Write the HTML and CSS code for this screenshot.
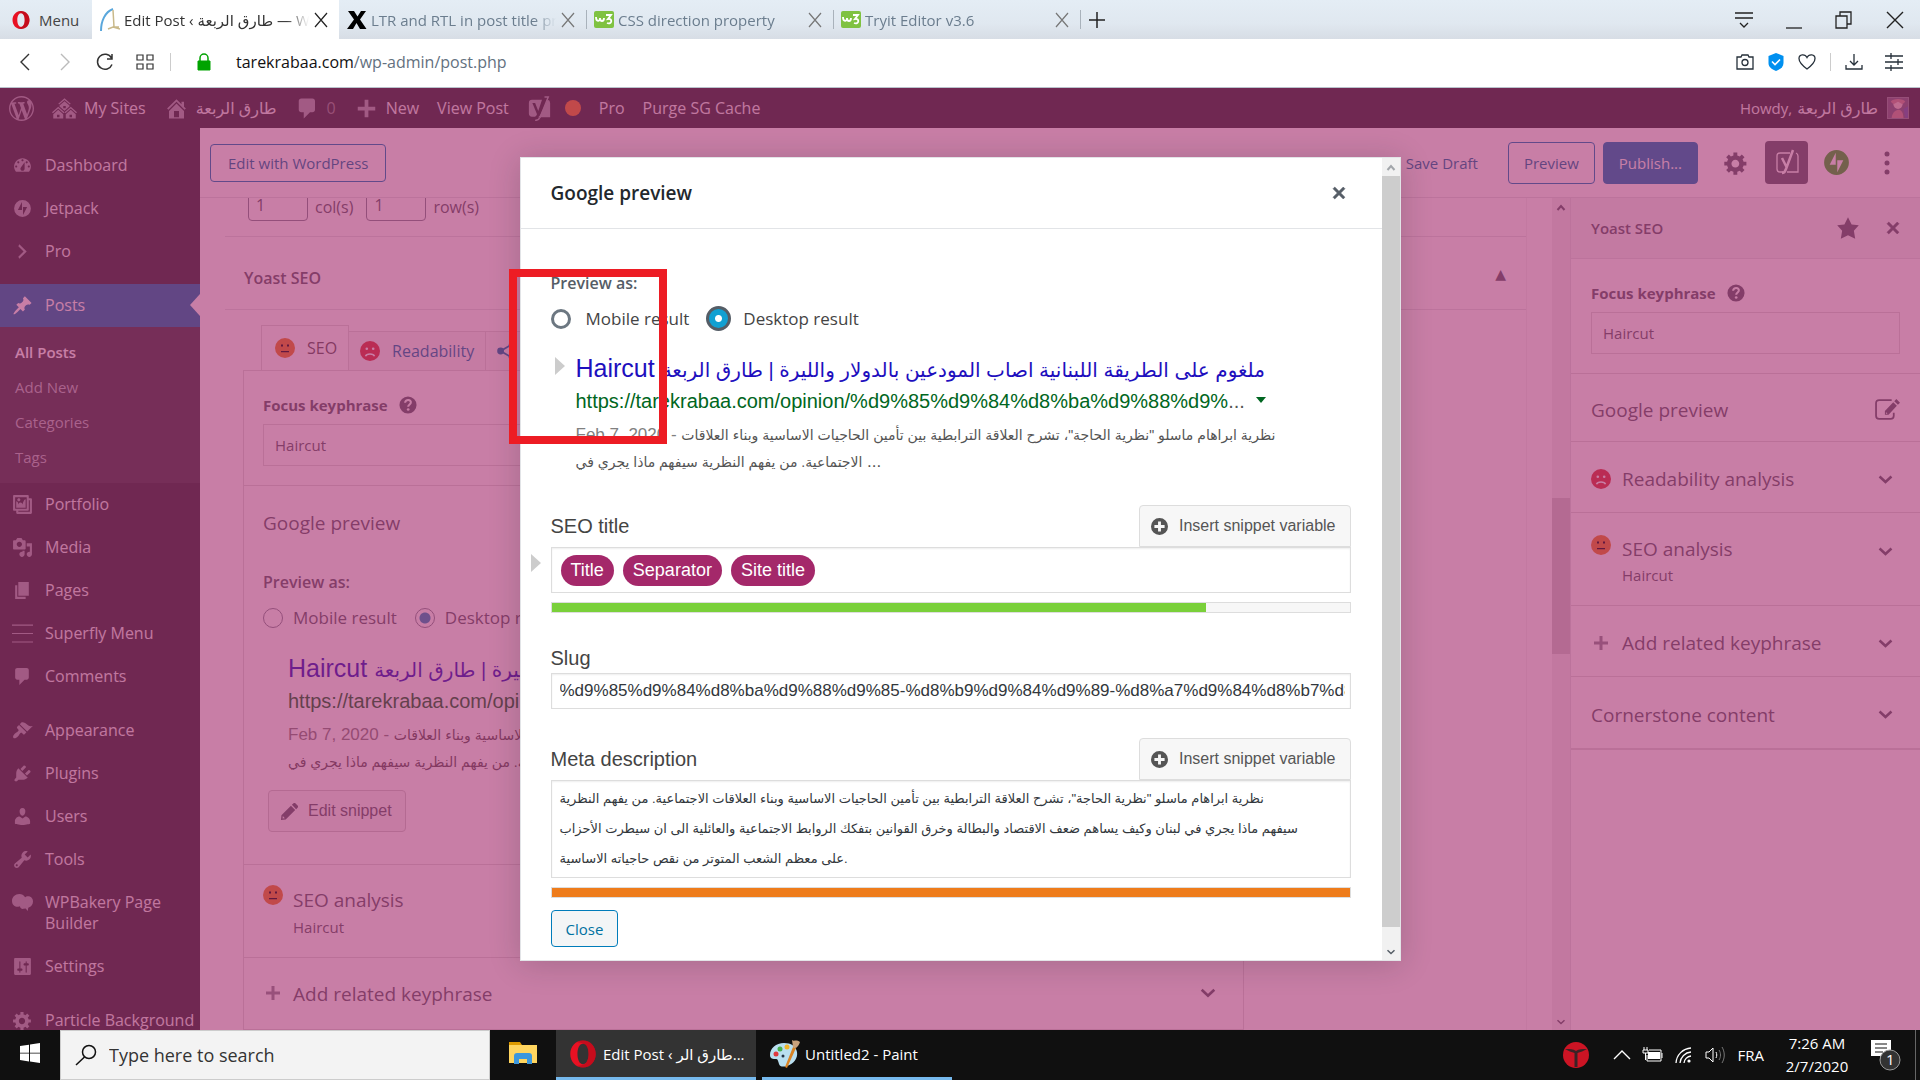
FILE: index.html
```html
<!DOCTYPE html>
<html lang="en">
<head>
  <meta charset="UTF-8">
  <title>Edit Post ‹ طارق الربعة — WordPress</title>
  <meta name="viewport" content="width=device-width, initial-scale=1.0">
  <link rel="stylesheet" href="styles.css">
</head>
<body>

  <!-- icon sprite -->
  <svg class="sprite" aria-hidden="true">
    <symbol id="i-opera" viewBox="0 0 20 20"><path fill="#e81123" d="M10 1C5 1 1.500 5 1.500 10S5 19 10 19c5 0 8.500-4 8.500-9S15 1 10 1zm0 2.200c2.400 0 3.700 3.200 3.700 6.800s-1.300 6.800-3.700 6.800S6.300 13.600 6.300 10 7.600 3.200 10 3.200z"/><path fill="#9b0614" d="M10 1c5 0 8.500 4 8.500 9S15 19 10 19c-1.500 0-2.700-.4-3.800-1.100C12.500 18 13.700 14 13.700 10S12.500 2.500 6.200 2.100C7.300 1.400 8.500 1 10 1z" opacity=".45"/></symbol>
    <symbol id="i-w3" viewBox="0 0 20 17"><rect width="20" height="17" rx="2" fill="#7fc241"/><path d="M2 6c0 5 4 5 4 1 0 4 4 4 4 0M12 4h5l-3 4c5-1 4 6-1 4" fill="none" stroke="#fff" stroke-width="1.800"/></symbol>
    <symbol id="i-close" viewBox="0 0 16 16"><path d="M2 1l12 14M14 1L2 15" fill="none" stroke="currentColor" stroke-width="1.200"/></symbol>
    <symbol id="i-wp" viewBox="0 0 20 20"><path fill-rule="evenodd" d="M20 10c0-5.510-4.490-10-10-10C4.480 0 0 4.490 0 10c0 5.520 4.480 10 10 10 5.510 0 10-4.480 10-10zM7.780 15.370L4.370 6.220c.55-.02 1.170-.08 1.170-.08.5-.06.44-1.130-.06-1.110 0 0-1.450.11-2.370.11-.18 0-.37 0-.58-.01C4.120 2.690 6.870 1.110 10 1.110c2.330 0 4.450.87 6.050 2.340-.68-.11-1.650.39-1.650 1.580 0 .74.45 1.360.9 2.100.35.61.55 1.360.55 2.460 0 1.490-1.400 5-1.400 5l-3.030-8.370c.54-.02.82-.17.82-.17.5-.05.44-1.250-.06-1.220 0 0-1.440.12-2.380.12-.87 0-2.330-.12-2.330-.12-.5-.03-.56 1.200-.06 1.220l.92.08 1.260 3.410zM17.410 10c.24-.64.74-1.870.43-4.250.7 1.290 1.050 2.710 1.050 4.250 0 3.290-1.730 6.240-4.400 7.780.97-2.590 1.940-5.200 2.920-7.780zM6.100 18.090C3.120 16.650 1.110 13.530 1.110 10c0-1.300.23-2.480.72-3.590C3.250 10.300 4.670 14.200 6.100 18.090zm4.030-6.630l2.580 6.980c-.86.29-1.760.45-2.710.45-.79 0-1.570-.11-2.290-.33.81-2.380 1.620-4.740 2.420-7.100z"/></symbol>
    <symbol id="i-sites" viewBox="0 0 20 20"><path fill-rule="evenodd" d="M14.270 6.870L10 3.140 5.730 6.870 5 6.140l5-4.380 5 4.380zM14 8.420l-4.050 3.430L6 8.380v-.74l4-3.500 4 3.500v.78zM11 9.700V8H9v1.700h2zm-1.730 4.030L5 10 .73 13.730 0 13l5-4.380L10 13zm10 0L15 10l-4.270 3.730L10 13l5-4.380L20 13zM5 11l4 3.500V18H1v-3.500zm10 0l4 3.500V18h-8v-3.500zm-9 6v-2H4v2h2zm10 0v-2h-2v2h2z"/></symbol>
    <symbol id="i-home" viewBox="0 0 20 20"><path fill-rule="evenodd" d="M16 8.500l1.530 1.530-1.060 1.060L10 4.600l-6.470 6.470-1.060-1.060L10 2.500l4 4v-2h2v4zm-6-2.460l6 5.990V18H4v-5.970zM12 17v-5H8v5h4z"/></symbol>
    <symbol id="i-comment" viewBox="0 0 20 20"><path d="M5 2h9c1.100 0 2 .9 2 2v7c0 1.100-.9 2-2 2h-2l-5 5v-5H5c-1.100 0-2-.9-2-2V4c0-1.100.9-2 2-2z"/></symbol>
    <symbol id="i-plus" viewBox="0 0 20 20"><path d="M17 8.500v3h-5.500V17h-3v-5.500H3v-3h5.500V3h3v5.500z"/></symbol>
    <symbol id="i-yoast" viewBox="0 0 20 20"><path fill-rule="evenodd" d="M4 3h8l-3 9-2.500-6.500H4.300L8 14.500c-.6 1.600-1.300 2-2.500 2H4A2.500 2.500 0 0 1 1.500 14V5.500A2.500 2.500 0 0 1 4 3zM16.500 3A2.500 2.500 0 0 1 18.500 5.500V17h-10c1.500-.5 2-1.500 2.600-3z"/><path fill="none" stroke="currentColor" stroke-width="1.200" d="M14 .8h3L10.500 17c-.9 2-2 2.500-4 2.500"/></symbol>
    <symbol id="i-dashboard" viewBox="0 0 20 20"><path fill-rule="evenodd" d="M3.760 16h12.480c1.100-1.370 1.760-3.110 1.760-5 0-4.420-3.580-8-8-8s-8 3.580-8 8c0 1.890.66 3.630 1.760 5zM10 4c.55 0 1 .45 1 1s-.45 1-1 1-1-.45-1-1 .45-1 1-1zM6 6c.55 0 1 .45 1 1s-.45 1-1 1-1-.45-1-1 .45-1 1-1zm8 0c.55 0 1 .45 1 1s-.45 1-1 1-1-.45-1-1 .45-1 1-1zm-5.370 5.550L12 7v6c0 1.100-.9 2-2 2s-2-.9-2-2c0-.57.24-1.080.63-1.450zM4 10c.55 0 1 .45 1 1s-.45 1-1 1-1-.45-1-1 .45-1 1-1zm12 0c.55 0 1 .45 1 1s-.45 1-1 1-1-.45-1-1 .45-1 1-1z"/></symbol>
    <symbol id="i-jetpack" viewBox="0 0 20 20"><path fill-rule="evenodd" d="M10 2a8 8 0 1 0 0 16 8 8 0 0 0 0-16zM9.500 3.700v7.700H5.600zM10.500 16.300V8.600h3.900z"/></symbol>
    <symbol id="i-right" viewBox="0 0 20 20"><path d="M6 15l5-5-5-5 1-2 7 7-7 7z"/></symbol>
    <symbol id="i-pin" viewBox="0 0 20 20"><path d="M10.440 3.020l1.820-1.820 6.360 6.350-1.830 1.820c-1.050-.68-2.480-.57-3.410.36l-.75.75c-.92.93-1.040 2.350-.35 3.410l-1.830 1.820-2.410-2.410-2.800 2.790c-.42.42-3.380 2.710-3.800 2.290s1.860-3.390 2.280-3.810l2.790-2.790L4.100 9.360l1.830-1.820c1.050.69 2.480.57 3.400-.36l.75-.75c.93-.92 1.050-2.350.36-3.410z"/></symbol>
    <symbol id="i-gallery" viewBox="0 0 20 20"><path fill-rule="evenodd" d="M16 4h1.960c.57 0 1.040.47 1.040 1.040v12.920c0 .57-.47 1.040-1.040 1.040H5.040C4.470 19 4 18.530 4 17.960V16H2.040C1.470 16 1 15.530 1 14.960V2.040C1 1.470 1.470 1 2.040 1h12.920c.57 0 1.040.47 1.040 1.040V4zM3 14h11V3H3v11zm5-8.500C8 4.670 7.330 4 6.500 4S5 4.670 5 5.500 5.670 7 6.500 7 8 6.330 8 5.500zm2 4.500s1-5 3-5v8H4V7c2 0 2 3 2 3s.33-2 2-2 2 2 2 2zm7 7V6h-1v8.960c0 .57-.47 1.040-1.040 1.040H6v1h11z"/></symbol>
    <symbol id="i-media" viewBox="0 0 20 20"><path fill-rule="evenodd" d="M13 11V4c0-.55-.45-1-1-1h-1.670L9 1H5L3.670 3H2c-.55 0-1 .45-1 1v7c0 .55.45 1 1 1h10c.55 0 1-.45 1-1zM7 4.500c1.380 0 2.500 1.120 2.500 2.500S8.380 9.500 7 9.500 4.500 8.380 4.500 7 5.620 4.500 7 4.500zM14 6h5v10.500c0 1.380-1.120 2.500-2.500 2.500S14 17.880 14 16.500s1.120-2.500 2.500-2.500c.17 0 .34.02.5.05V9h-3V6zm-4 8.050V13h2v3.500c0 1.380-1.120 2.500-2.500 2.500S7 17.880 7 16.500 8.120 14 9.500 14c.17 0 .34.02.5.05z"/></symbol>
    <symbol id="i-pages" viewBox="0 0 20 20"><path d="M6 15V2h10v13H6zm-1 1h8v2H3V5h2v11z"/></symbol>
    <symbol id="i-lines" viewBox="0 0 20 20"><path d="M0 2h20M0 10h20M0 18h20" fill="none" stroke="currentColor"/></symbol>
    <symbol id="i-brush" viewBox="0 0 20 20"><path d="M14.480 11.060L7.410 3.990l1.500-1.500c.5-.56 2.300-.47 3.510.32 1.210.8 1.430 1.280 2.910 2.100 1.180.64 2.450 1.260 4.450.85zm-.71.71L6.700 4.700 4.930 6.470c-.39.39-.39 1.020 0 1.410l1.060 1.060c.39.39.39 1.030 0 1.420-.6.6-1.430 1.110-2.210 1.690-.35.26-.7.53-1.010.84C1.430 14.230.4 16.080 1.400 17.070c.99 1 2.840-.03 4.180-1.360.31-.31.58-.66.85-1.020.57-.78 1.080-1.610 1.690-2.210.39-.39 1.020-.39 1.410 0l1.060 1.060c.39.39 1.020.39 1.410 0z"/></symbol>
    <symbol id="i-plug" viewBox="0 0 20 20"><path d="M13.110 4.360L9.870 7.600 8 5.730l3.240-3.240c.35-.34 1.050-.2 1.560.32.52.51.66 1.210.31 1.550zm-8 1.770l.91-1.120 9.010 9.010-1.190.84c-.71.71-2.630 1.160-3.820 1.160H6.140L4.900 17.260c-.59.59-1.540.59-2.120 0-.59-.58-.59-1.530 0-2.120l1.240-1.240v-3.880c0-1.130.4-3.190 1.090-3.890zm7.260 3.970l3.240-3.240c.34-.35 1.040-.21 1.550.31.52.51.66 1.210.31 1.550l-3.240 3.250z"/></symbol>
    <symbol id="i-user" viewBox="0 0 20 20"><path d="M10 9.250c-2.270 0-2.730-3.440-2.730-3.440C7 4.020 7.820 2 9.970 2c2.160 0 2.980 2.020 2.710 3.810 0 0-.41 3.440-2.680 3.440zm0 2.570L12.720 10c2.390 0 4.520 2.330 4.520 4.530v2.490s-3.650 1.130-7.240 1.130c-3.650 0-7.240-1.130-7.240-1.130v-2.490c0-2.250 1.940-4.480 4.470-4.480z"/></symbol>
    <symbol id="i-wrench" viewBox="0 0 20 20"><path fill-rule="evenodd" d="M16.680 9.770c-1.340 1.340-3.300 1.670-4.950.99l-5.410 6.520c-.99.99-2.590.99-3.580 0s-.99-2.590 0-3.570l6.520-5.420c-.68-1.650-.35-3.610.99-4.950 1.280-1.280 3.120-1.620 4.720-1.060l-2.890 2.890 2.820 2.820 2.860-2.870c.53 1.580.18 3.390-1.080 4.650zM3.810 16.210c.4.39 1.040.39 1.430 0 .4-.4.4-1.040 0-1.430-.39-.4-1.030-.4-1.430 0-.39.39-.39 1.030 0 1.430z"/></symbol>
    <symbol id="i-bakery" viewBox="0 0 20 20"><path d="M7 2C3 2 0 5 0 8.500 0 12 2.500 14 5.500 14c1 0 1.500-.3 2-.5.500 2 2 3 3.500 2.500l2-.3 2 2.300.5-3C18.500 14 20 11.500 20 9c0-3-2-5-4.500-5-1.500 0-2.500.6-3 1C11 3 9.500 2 7 2z"/></symbol>
    <symbol id="i-sliders" viewBox="0 0 20 20"><path fill-rule="evenodd" d="M18 17V3c0-.55-.45-1-1-1H3c-.55 0-1 .45-1 1v14c0 .55.45 1 1 1h14c.55 0 1-.45 1-1zM8 12h1c.55 0 1 .45 1 1s-.45 1-1 1H8v1.500c0 .28-.22.5-.5.5s-.5-.22-.5-.5V14H6c-.55 0-1-.45-1-1s.45-1 1-1h1V5.500c0-.28.22-.5.5-.5s.5.22.5.5V12zm5-3h-1c-.55 0-1-.45-1-1s.45-1 1-1h1V5.500c0-.28.22-.5.5-.5s.5.22.5.5V7h1c.55 0 1 .45 1 1s-.45 1-1 1h-1v6.500c0 .28-.22.5-.5.5s-.5-.22-.5-.5V9z"/></symbol>
    <symbol id="i-gear" viewBox="0 0 20 20"><path fill-rule="evenodd" d="M18 12h-2.180c-.17.7-.44 1.350-.81 1.930l1.540 1.540-2.100 2.100-1.540-1.540c-.58.36-1.230.63-1.910.79V19H8v-2.180c-.68-.16-1.330-.43-1.910-.79l-1.540 1.540-2.120-2.120 1.540-1.540c-.36-.58-.63-1.230-.79-1.910H1V9.030h2.170c.16-.7.44-1.350.8-1.940L2.430 5.550l2.100-2.100 1.540 1.540c.58-.37 1.240-.64 1.930-.81V2h3v2.180c.68.16 1.330.43 1.910.79l1.540-1.540 2.120 2.120-1.540 1.540c.36.59.64 1.240.8 1.940H18V12zm-8.500 1.500c1.660 0 3-1.340 3-3s-1.340-3-3-3-3 1.340-3 3 1.340 3 3 3z"/></symbol>
    <symbol id="i-star" viewBox="0 0 20 20"><path d="M10 1l3 6 6 .75-4.120 4.620L16 19l-6-3-6 3 1.130-6.630L1 7.750 7 7z"/></symbol>
    <symbol id="i-x" viewBox="0 0 20 20"><path stroke="currentColor" stroke-width=".5" d="M14.950 6.460L11.410 10l3.540 3.540-1.410 1.410L10 11.420l-3.530 3.530-1.420-1.420L8.580 10 5.050 6.470l1.420-1.420L10 8.580l3.540-3.530z"/></symbol>
    <symbol id="i-help" viewBox="0 0 20 20"><circle cx="10" cy="10" r="9.500"/><path d="M6.800 7.500c.3-4.500 7-3.800 6.300.2-.3 1.700-2.900 1.900-2.900 4.300" fill="none" stroke="#fff" stroke-width="2.300"/><circle cx="10.200" cy="15" r="1.500" fill="#fff"/></symbol>
    <symbol id="i-ok" viewBox="0 0 20 20"><circle cx="10" cy="10" r="10" fill="#ee7c1b"/><path fill="#000" d="M6 6.500h2v2H6zM12 6.500h2v2h-2zM6 13h8v1.200H6z"/></symbol>
    <symbol id="i-bad" viewBox="0 0 20 20"><circle cx="10" cy="10" r="10" fill="#dc3232"/><circle cx="6.800" cy="7.800" r="1.300" fill="#fff"/><circle cx="13.200" cy="7.800" r="1.300" fill="#fff"/><path d="M5.500 15.200c1-3 8-3 9 0" fill="none" stroke="#fff" stroke-width="1.500"/></symbol>
    <symbol id="i-down" viewBox="0 0 20 20"><path d="M3 6.500l7 6.500 7-6.500" fill="none" stroke="currentColor" stroke-width="3"/></symbol>
    <symbol id="i-circleplus" viewBox="0 0 20 20"><path fill-rule="evenodd" d="M10 0a10 10 0 1 0 0 20 10 10 0 0 0 0-20zM8.300 4h3.400v4.300H16v3.400h-4.300V16H8.300v-4.300H4V8.300h4.300z"/></symbol>
    <symbol id="i-pencil" viewBox="0 0 20 20"><path fill-rule="evenodd" d="M14 1.500c.7-.7 1.700-.7 2.400 0l2.100 2.100c.7.7.7 1.700 0 2.400L17 7.500 12.500 3zM11.500 4L16 8.500 6 18.500l-5 .5.500-5zM3 14.800l-.3 2.500 2.400-.3z"/></symbol>
    <symbol id="i-edit" viewBox="0 0 24 20"><path d="M16 1H4C2 1 1 2 1 4v12c0 2 1 3 3 3h11c2 0 3-1 3-3v-3" fill="none" stroke="currentColor" stroke-width="1.700"/><path fill-rule="evenodd" d="M20.500 0L24 3.500l-2 2L18.500 2zM17.500 3L21 6.500 13 15H9.500v-3.500zm-7 9.500v1.500H12z"/></symbol>
    <symbol id="i-share" viewBox="0 0 20 20"><circle cx="4" cy="10" r="3.800"/><circle cx="16" cy="3" r="3"/><circle cx="16" cy="17" r="3"/><path d="M16 3L4 10l12 7" fill="none" stroke="currentColor" stroke-width="2"/></symbol>
  </svg>

  <header class="browser">
    <div class="tabs">
      <button class="opera-menu"><svg width="20" height="20"><use href="#i-opera"/></svg>Menu</button>
      <div class="tab active">
        <svg width="20" height="24" viewBox="0 0 20 24"><path d="M13 1C5 4 1 13 1 23" fill="none" stroke="#5aa7dc" stroke-width="2"/><path d="M13 2l1 17M8 21l5-2 7 2M14 19l5 0" fill="none" stroke="#c9b98a" stroke-width="1.500"/></svg>
        <span class="tab-title">Edit Post ‹ طارق الربعة — WordPress</span>
        <button class="tab-close" aria-label="Close tab"><svg width="16" height="16"><use href="#i-close"/></svg></button>
      </div>
      <div class="tab">
        <svg width="20" height="20" viewBox="0 0 20 20"><path d="M1 1h6l3.500 5.500L14 1h5l-6 8.500L19.500 19H13l-3.500-6L6 19H0l7-9.500z" fill="#000"/></svg>
        <span class="tab-title">LTR and RTL in post title preview</span>
        <button class="tab-close" aria-label="Close tab"><svg width="16" height="16"><use href="#i-close"/></svg></button>
      </div>
      <div class="tab">
        <svg width="20" height="17"><use href="#i-w3"/></svg>
        <span class="tab-title">CSS direction property</span>
        <button class="tab-close" aria-label="Close tab"><svg width="16" height="16"><use href="#i-close"/></svg></button>
      </div>
      <div class="tab">
        <svg width="20" height="17"><use href="#i-w3"/></svg>
        <span class="tab-title">Tryit Editor v3.6</span>
        <button class="tab-close" aria-label="Close tab"><svg width="16" height="16"><use href="#i-close"/></svg></button>
      </div>
      <button class="new-tab" aria-label="New tab"><svg width="16" height="16" viewBox="0 0 16 16"><path d="M8 0v16M0 8h16" stroke="#222" stroke-width="1.500"/></svg></button>
      <div class="window-buttons">
        <button aria-label="Tab menu"><svg width="18" height="18" viewBox="0 0 18 18"><path d="M0 2h18M0 7h18M5 12l4 4 4-4" fill="none" stroke="#222" stroke-width="1.300"/></svg></button>
        <button aria-label="Minimize"><svg width="16" height="18" viewBox="0 0 16 18"><path d="M0 17h16" stroke="#222" stroke-width="1.300"/></svg></button>
        <button aria-label="Restore"><svg width="18" height="18" viewBox="0 0 18 18"><path d="M1 5h11v12H1zM5 5V1h11v12h-4" fill="none" stroke="#222" stroke-width="1.300"/></svg></button>
        <button aria-label="Close"><svg width="18" height="18" viewBox="0 0 18 18"><path d="M1 1l16 16M17 1L1 17" stroke="#222" stroke-width="1.400"/></svg></button>
      </div>
    </div>
    <div class="address-bar">
      <div class="nav-buttons">
        <button aria-label="Back"><svg width="18" height="18" viewBox="0 0 18 18"><path d="M13 1L5 9l8 8" fill="none" stroke="#333" stroke-width="1.400"/></svg></button>
        <button aria-label="Forward"><svg width="18" height="18" viewBox="0 0 18 18"><path d="M5 1l8 8-8 8" fill="none" stroke="#bbb" stroke-width="1.400"/></svg></button>
        <button aria-label="Reload"><svg width="18" height="18" viewBox="0 0 18 18"><path d="M16 11.500A7.500 7.500 0 1 1 15.500 5M16 1v5h-5" fill="none" stroke="#333" stroke-width="1.500"/></svg></button>
        <button aria-label="Speed dial"><svg width="18" height="18" viewBox="0 0 18 18"><path d="M1 2h6v5H1zM11 2h6v5h-6zM1 11h6v5H1zM11 11h6v5h-6z" fill="none" stroke="#333" stroke-width="1.200"/></svg></button>
      </div>
      <span class="divider"></span>
      <svg class="lock" width="14" height="18" viewBox="0 0 14 18"><path d="M1 8h12v9H1z" fill="#00a300" stroke="#00a300"/><path d="M3 8V5a4 4 0 0 1 8 0v3" fill="none" stroke="#00a300" stroke-width="1.500"/></svg>
      <span class="url">tarekrabaa.com<span>/wp-admin/post.php</span></span>
      <div class="address-tools">
        <button aria-label="Snapshot"><svg width="18" height="18" viewBox="0 0 18 18"><path d="M1 4h4l1-2h6l1 2h4v12H1z" fill="none" stroke="#26303a" stroke-width="1.300"/><circle cx="9" cy="9.500" r="3" fill="none" stroke="#26303a" stroke-width="1.300"/></svg></button>
        <button aria-label="Protection"><svg width="16" height="18" viewBox="0 0 16 18"><path d="M8 0l7.500 3v7c0 4-3 6-7.500 8-4.500-2-7.500-4-7.500-8V3z" fill="#0090f0"/><path d="M4 8.500l3 3 5-5" fill="none" stroke="#fff" stroke-width="1.600"/></svg></button>
        <button aria-label="Bookmark"><svg width="18" height="18" viewBox="0 0 18 18"><path d="M9 16C5 13 1 9.500 1 5.500 1 1 7 .5 9 4.500 11 .5 17 1 17 5.500 17 9.500 13 13 9 16z" fill="none" stroke="#26303a" stroke-width="1.300"/></svg></button>
        <span class="divider"></span>
        <button aria-label="Downloads"><svg width="18" height="18" viewBox="0 0 18 18"><path d="M9 1v11M5 8l4 4 4-4M1 12v4h16v-4" fill="none" stroke="#26303a" stroke-width="1.300"/></svg></button>
        <button aria-label="Easy setup"><svg width="18" height="18" viewBox="0 0 18 18"><path d="M0 3h18M0 9h18M0 15h18M6 0v6M13 6v6M6 12v6" stroke="#26303a" stroke-width="1.300"/></svg></button>
      </div>
    </div>
  </header>

  <div class="page">
    <nav class="adminbar">
      <a href="#" class="muted"><svg width="25" height="25"><use href="#i-wp"/></svg></a>
      <a href="#"><svg width="25" height="25"><use href="#i-sites"/></svg>My Sites</a>
      <a href="#" class="ar"><svg width="25" height="25"><use href="#i-home"/></svg>طارق الربعة</a>
      <a href="#" class="count"><svg width="25" height="25"><use href="#i-comment"/></svg>0</a>
      <a href="#"><svg width="25" height="25"><use href="#i-plus"/></svg>New</a>
      <a href="#">View Post</a>
      <a href="#" class="yoast"><svg width="25" height="25"><use href="#i-yoast"/></svg><span class="dot"></span></a>
      <a href="#">Pro</a>
      <a href="#">Purge SG Cache</a>
      <a href="#" class="howdy">Howdy, <span class="ar">طارق الربعة</span>
        <svg class="avatar" width="22" height="22" viewBox="0 0 22 22"><rect width="22" height="22" fill="#6d6475"/><circle cx="11" cy="7" r="5" fill="#e8cfc6"/><path d="M3 4c2-4 14-4 16 0l-3 3-5-3-5 3zM4 22c1-7 5-9 8-9s5 4 5 9z" fill="#c58f8a"/><path d="M17 12l5-3v13h-3z" fill="#5a63a0"/></svg>
      </a>
    </nav>

    <div class="wp">
      <nav class="adminmenu">
        <ul>
          <li><a href="#"><svg width="25" height="25"><use href="#i-dashboard"/></svg>Dashboard</a></li>
          <li><a href="#"><svg width="25" height="25"><use href="#i-jetpack"/></svg>Jetpack</a></li>
          <li><a href="#"><svg width="25" height="25"><use href="#i-right"/></svg>Pro</a></li>
        </ul>
        <ul>
          <li class="current"><a href="#"><svg width="25" height="25"><use href="#i-pin"/></svg>Posts</a>
            <ul class="submenu">
              <li><a href="#" class="selected">All Posts</a></li>
              <li><a href="#">Add New</a></li>
              <li><a href="#">Categories</a></li>
              <li><a href="#">Tags</a></li>
            </ul>
          </li>
          <li><a href="#"><svg width="25" height="25"><use href="#i-gallery"/></svg>Portfolio</a></li>
          <li><a href="#"><svg width="25" height="25"><use href="#i-media"/></svg>Media</a></li>
          <li><a href="#"><svg width="25" height="25"><use href="#i-pages"/></svg>Pages</a></li>
          <li><a href="#"><svg width="25" height="25"><use href="#i-lines"/></svg>Superfly Menu</a></li>
          <li><a href="#"><svg width="25" height="25"><use href="#i-comment"/></svg>Comments</a></li>
        </ul>
        <ul>
          <li><a href="#"><svg width="25" height="25"><use href="#i-brush"/></svg>Appearance</a></li>
          <li><a href="#"><svg width="25" height="25"><use href="#i-plug"/></svg>Plugins</a></li>
          <li><a href="#"><svg width="25" height="25"><use href="#i-user"/></svg>Users</a></li>
          <li><a href="#"><svg width="25" height="25"><use href="#i-wrench"/></svg>Tools</a></li>
          <li><a href="#"><svg width="25" height="25"><use href="#i-bakery"/></svg>WPBakery Page<br>Builder</a></li>
          <li><a href="#"><svg width="25" height="25"><use href="#i-sliders"/></svg>Settings</a></li>
        </ul>
        <ul>
          <li><a href="#"><svg width="25" height="25"><use href="#i-gear"/></svg>Particle Background</a></li>
        </ul>
      </nav>

      <main class="editor">
        <div class="editor-header">
          <button class="btn outline">Edit with WordPress</button>
          <div class="editor-actions">
            <button class="link-btn">Save Draft</button>
            <button class="btn outline tall">Preview</button>
            <button class="btn primary tall">Publish...</button>
            <button class="icon-btn" aria-label="Settings"><svg width="26" height="26"><use href="#i-gear"/></svg></button>
            <button class="icon-btn pressed" aria-label="Yoast SEO"><svg width="28" height="28" viewBox="0 0 28 28"><path d="M17 4H7C5 4 4 5 4 7v13c0 2 1 3 3 3h3M14 23h11V7c0-1.500-.8-2.500-2-3" fill="none" stroke="#fff" stroke-width="1.300"/><path d="M9 9l5 10M20 1l-7 19c-1 3-2 4-4 4" fill="none" stroke="#fff" stroke-width="2.500"/></svg></button>
            <button class="icon-btn jetpack" aria-label="Jetpack"><svg width="31" height="31"><use href="#i-jetpack"/></svg></button>
            <button class="icon-btn" aria-label="More"><svg width="6" height="24" viewBox="0 0 6 24"><circle cx="3" cy="3" r="2.500"/><circle cx="3" cy="12" r="2.500"/><circle cx="3" cy="21" r="2.500"/></svg></button>
          </div>
        </div>

        <div class="editor-body">
          <div class="metaboxes">
            <div class="grid-fields">
              <input type="text" id="cols" value="1"><label for="cols">col(s)</label>
              <input type="text" id="rows" value="1"><label for="rows">row(s)</label>
            </div>
            <div class="metabox-title"><h2>Yoast SEO</h2><span>▲</span></div>

            <div class="yoast-box">
              <div class="yoast-tabs">
                <button class="active"><svg width="20" height="20"><use href="#i-ok"/></svg>SEO</button>
                <button><svg width="20" height="20"><use href="#i-bad"/></svg>Readability</button>
                <button aria-label="Social"><svg width="18" height="20"><use href="#i-share"/></svg></button>
              </div>
              <div class="yoast-panel">
                <section class="keyphrase">
                  <label for="kw1">Focus keyphrase <svg width="18" height="18"><use href="#i-help"/></svg></label>
                  <input type="text" id="kw1" value="Haircut">
                </section>
                <section class="preview-section">
                  <h3>Google preview</h3>
                  <div class="preview-as">Preview as:</div>
                  <div class="radios">
                    <label><input type="radio" name="view1">Mobile result</label>
                    <label><input type="radio" name="view1" checked>Desktop result</label>
                  </div>
                  <div class="snippet">
                    <div class="snippet-title">Haircut <span class="ar">ملغوم على الطريقة اللبنانية اصاب المودعين بالدولار والليرة | طارق الربعة</span></div>
                    <div class="snippet-url">https://tarekrabaa.com/opinion/%d9%85%d9%84%d8%ba%d9%88%d9%...</div>
                    <div class="snippet-desc"><span class="date">Feb 7, 2020 - </span><span class="ar">نظرية ابراهام ماسلو "نظرية الحاجة"، تشرح العلاقة الترابطية بين تأمين الحاجيات الاساسية وبناء العلاقات<br>الاجتماعية. من يفهم النظرية سيفهم ماذا يجري في</span> ...</div>
                  </div>
                  <button class="edit-snippet"><svg width="19" height="19"><use href="#i-pencil"/></svg>Edit snippet</button>
                </section>
                <section class="collapse">
                  <svg width="20" height="20"><use href="#i-ok"/></svg>
                  <div><h3>SEO analysis</h3><p>Haircut</p></div>
                </section>
                <section class="collapse related">
                  <svg width="20" height="20" class="soft"><use href="#i-plus"/></svg>
                  <div><h3>Add related keyphrase</h3></div>
                  <svg width="18" height="18" class="chevron"><use href="#i-down"/></svg>
                </section>
              </div>
            </div>
          </div>

          <div class="scrollbar page-scroll">
            <svg width="10" height="10" viewBox="0 0 20 20"><path d="M3 14l7-8 7 8" fill="none" stroke="currentColor" stroke-width="4"/></svg>
            <span class="thumb"></span>
            <svg width="10" height="10"><use href="#i-down"/></svg>
          </div>

          <aside class="yoast-sidebar">
            <div class="sidebar-header">
              <strong>Yoast SEO</strong>
              <button aria-label="Unpin"><svg width="24" height="24"><use href="#i-star"/></svg></button>
              <button aria-label="Close settings"><svg width="24" height="24"><use href="#i-x"/></svg></button>
            </div>
            <section class="keyphrase">
              <label for="kw2">Focus keyphrase <svg width="18" height="18"><use href="#i-help"/></svg></label>
              <input type="text" id="kw2" value="Haircut">
            </section>
            <button class="side-row preview-row"><span>Google preview</span><svg width="25" height="21" class="end"><use href="#i-edit"/></svg></button>
            <button class="side-row"><svg width="20" height="20"><use href="#i-bad"/></svg><span>Readability analysis</span><svg width="17" height="17" class="end"><use href="#i-down"/></svg></button>
            <button class="side-row two-line"><svg width="20" height="20"><use href="#i-ok"/></svg><span>SEO analysis<small>Haircut</small></span><svg width="17" height="17" class="end"><use href="#i-down"/></svg></button>
            <button class="side-row"><svg width="20" height="20" class="soft"><use href="#i-plus"/></svg><span>Add related keyphrase</span><svg width="17" height="17" class="end"><use href="#i-down"/></svg></button>
            <button class="side-row last"><span>Cornerstone content</span><svg width="17" height="17" class="end"><use href="#i-down"/></svg></button>
          </aside>
        </div>
      </main>
    </div>

    <div class="overlay">
      <div class="modal" role="dialog" aria-labelledby="modal-title">
        <div class="modal-main">
          <div class="modal-header">
            <h1 id="modal-title">Google preview</h1>
            <button aria-label="Close dialog"><svg width="24" height="24"><use href="#i-x"/></svg></button>
          </div>
          <div class="modal-body">
            <div class="preview-as">Preview as:</div>
            <div class="radios big">
              <label><input type="radio" name="view2">Mobile result</label>
              <label><input type="radio" name="view2" checked>Desktop result</label>
            </div>
            <div class="snippet with-caret">
              <div class="snippet-title">Haircut <span class="ar">ملغوم على الطريقة اللبنانية اصاب المودعين بالدولار والليرة | طارق الربعة</span></div>
              <div class="snippet-url">https://tarekrabaa.com/opinion/%d9%85%d9%84%d8%ba%d9%88%d9%<span class="dots">...</span></div>
              <div class="snippet-desc"><span class="date">Feb 7, 2020 - </span><span class="ar">نظرية ابراهام ماسلو "نظرية الحاجة"، تشرح العلاقة الترابطية بين تأمين الحاجيات الاساسية وبناء العلاقات<br>الاجتماعية. من يفهم النظرية سيفهم ماذا يجري في</span> ...</div>
            </div>

            <div class="field-head">
              <span>SEO title</span>
              <button class="insert"><svg width="17" height="17"><use href="#i-circleplus"/></svg>Insert snippet variable</button>
            </div>
            <div class="title-field">
              <span class="pill">Title</span>
              <span class="pill">Separator</span>
              <span class="pill">Site title</span>
            </div>
            <div class="bar"><span class="good"></span></div>

            <label class="slug-label" for="slug">Slug</label>
            <input class="slug" type="text" id="slug" value="%d9%85%d9%84%d8%ba%d9%88%d9%85-%d8%b9%d9%84%d9%89-%d8%a7%d9%84%d8%b7%d8%b1%d9%8a%d9%82%d8%a9">

            <div class="field-head meta-head">
              <label for="meta">Meta description</label>
              <button class="insert"><svg width="17" height="17"><use href="#i-circleplus"/></svg>Insert snippet variable</button>
            </div>
            <textarea id="meta" rows="3">نظرية ابراهام ماسلو "نظرية الحاجة"، تشرح العلاقة الترابطية بين تأمين الحاجيات الاساسية وبناء العلاقات الاجتماعية. من يفهم النظرية
سيفهم ماذا يجري في لبنان وكيف يساهم ضعف الاقتصاد والبطالة وخرق القوانين بتفكك الروابط الاجتماعية والعائلية الى ان سيطرت الأحزاب
على معظم الشعب المتوتر من نقص حاجياته الاساسية.</textarea>
            <div class="bar"><span class="ok"></span></div>
            <button class="close-btn">Close</button>
          </div>
        </div>
        <div class="scrollbar modal-scroll">
          <svg width="10" height="10" viewBox="0 0 20 20" class="faint"><path d="M3 14l7-8 7 8" fill="none" stroke="currentColor" stroke-width="4"/></svg>
          <span class="thumb"></span>
          <svg width="10" height="10"><use href="#i-down"/></svg>
        </div>
        <div class="red-box"></div>
      </div>
    </div>
  </div>

  <footer class="taskbar">
    <button class="start" aria-label="Start"><svg width="20" height="20" viewBox="0 0 20 20"><path d="M0 3l9-1.300v8H0zM10 1.500L20 0v9.700H10zM0 10.500h9v8L0 17zM10 10.500h10V20l-10-1.500z" fill="#fff"/></svg></button>
    <label class="search">
      <svg width="22" height="22" viewBox="0 0 22 22"><circle cx="14" cy="8" r="6.500" fill="none" stroke="#111" stroke-width="1.500"/><path d="M9.500 13L1 21" stroke="#111" stroke-width="1.500"/></svg>
      <input type="text" placeholder="Type here to search">
    </label>
    <button class="explorer" aria-label="File Explorer"><svg width="28" height="24" viewBox="0 0 28 24"><path d="M0 1h11l2 3h13v4H0z" fill="#dd9a00"/><path d="M0 4h28v18H0z" fill="#ffd55f"/><path d="M5 23v-8c0-2 1-3 3-3h12c2 0 3 1 3 3v8h-5v-5h-8v5z" fill="#3c97dd"/></svg></button>
    <button class="task active"><svg width="30" height="30"><use href="#i-opera"/></svg><span>Edit Post ‹ طارق الر...</span></button>
    <button class="task paint"><svg width="30" height="30" viewBox="0 0 30 30"><path d="M14 4C6 4 0 9 0 16c0 4 3 4 6 4 2 0 2 2 3 5 1 3 4 3 8 2 7-2 11-8 10-14-1-6-6-9-13-9z" fill="#b9dff0"/><circle cx="6" cy="15" r="2.500" fill="#e0393e"/><circle cx="10" cy="10" r="2.500" fill="#47ae4b"/><circle cx="17" cy="8" r="2.500" fill="#f0b429"/><circle cx="13" cy="17" r="1.500" fill="#234"/><path d="M23 8l3 1-9 20-2-1z" fill="#d98324"/><path d="M22 1c2 2 4-1 8 2-1 3-2 4-4 6l-3-1z" fill="#c9a27c"/></svg><span>Untitled2 - Paint</span></button>
    <div class="tray">
      <svg width="26" height="26" viewBox="0 0 26 26"><circle cx="13" cy="13" r="13" fill="#cc1424"/><path d="M2 7c5 0 8 0 11 2 3-2 6-2 11-2-3 2-7 3-9.500 4v14h-3V11C9 10 5 9 2 7z" fill="#3a2326"/></svg>
      <svg width="16" height="16" viewBox="0 0 16 16"><path d="M0 12l8-8 8 8" fill="none" stroke="#fff" stroke-width="1.400"/></svg>
      <svg width="20" height="16" viewBox="0 0 20 16"><path d="M5 5h12v7H5z" fill="#fff"/><path d="M4 8v6h14V3H6M19 6v5M0 3h5v3H0zM1 0v3M4 0v3M2.500 6v7" fill="none" stroke="#fff"/></svg>
      <svg width="16" height="16" viewBox="0 0 16 16"><path d="M0 16A16 16 0 0 1 15 1M4 16A12 12 0 0 1 15 5M8 16a8 8 0 0 1 7-7" fill="none" stroke="#fff" stroke-width="1.300"/><circle cx="13" cy="14" r="1.600" fill="#fff"/></svg>
      <svg width="20" height="18" viewBox="0 0 20 18"><path d="M1 6h3l4-4v14l-4-4H1z" fill="none" stroke="#fff"/><path d="M11 6c1 2 1 4 0 6" fill="none" stroke="#fff"/><path d="M14 4c2 3 2 7 0 10M17 1c3 5 3 11 0 16" fill="none" stroke="#777"/></svg>
      <span class="lang">FRA</span>
      <div class="clock">7:26 AM<br>2/7/2020</div>
      <button class="notes" aria-label="Notifications"><svg width="32" height="32" viewBox="0 0 32 32"><path d="M1 1h20v16h-6l-5 5v-5H1z" fill="#fff"/><path d="M5 5h12M5 9h12M5 13h8" stroke="#101010"/><circle cx="20" cy="21" r="10" fill="#333" stroke="#999"/></svg><b>1</b></button>
      <span class="show-desktop"></span>
    </div>
  </footer>

</body>
</html>
```
FILE: styles.css
```css
* {
  box-sizing: border-box;
}

body {
  display: flex;
  flex-direction: column;
  height: 100vh;
  margin: 0;
  overflow: hidden;
  font-family: "Open Sans", "DejaVu Sans", sans-serif;
  font-size: 16px;
  color: #555d66;
}

button {
  padding: 0;
  border: 0;
  background: none;
  font: inherit;
  color: inherit;
}

input,
textarea {
  font: inherit;
  color: inherit;
}

a {
  color: inherit;
  text-decoration: none;
}

h1, h2, h3, p, ul {
  margin: 0;
  padding: 0;
}

ul {
  list-style: none;
}

svg {
  flex: none;
  fill: currentColor;
}

.sprite {
  position: absolute;
  width: 0;
  height: 0;
}

/* browser */
.tabs {
  display: flex;
  height: 39px;
  background: linear-gradient(#e4edf5, #e0e8f0 60%, #d7dde5);
  font-size: 15px;
}

.opera-menu {
  display: flex;
  align-items: center;
  gap: 8px;
  width: 92px;
  padding-left: 11px;
  color: #444;
}

.tab {
  display: flex;
  align-items: center;
  gap: 4px;
  width: 247px;
  padding: 0 10px 0 8px;
  color: #6b7d8e;
}

.tab + .tab + .tab {
  background: linear-gradient(#a9b2bb, #a9b2bb) left center / 1px 19px no-repeat;
}

.tab.active {
  background: #fff;
  color: #333;
}

.tab-title {
  flex: 1;
  overflow: hidden;
  white-space: nowrap;
  mask-image: linear-gradient(to right, #000 88%, transparent);
}

.tab-close {
  display: flex;
  color: #777;
}

.active .tab-close {
  color: #222;
}

.new-tab {
  display: flex;
  align-items: center;
  padding: 0 9px;
  background: linear-gradient(#a9b2bb, #a9b2bb) left center / 1px 19px no-repeat;
}

.window-buttons {
  display: flex;
  align-items: center;
  gap: 33px;
  margin-left: auto;
  padding-right: 16px;
}

.window-buttons button,
.nav-buttons button,
.address-tools button {
  display: flex;
}

.address-bar {
  display: flex;
  align-items: center;
  height: 49px;
  border-bottom: 1px solid #b9c3cc;
  background: #fff;
  padding: 0 17px 2px 16px;
}

.nav-buttons {
  display: flex;
  gap: 22px;
}

.divider {
  width: 1px;
  height: 18px;
  background: #ccc;
}

.nav-buttons + .divider {
  margin: 0 26px 0 16px;
}

.url {
  margin-left: 25px;
  font-size: 16px;
  color: #111;
}

.url span {
  color: #637180;
}

.address-tools {
  display: flex;
  align-items: center;
  gap: 14px;
  margin-left: auto;
}

.address-tools button:last-child {
  margin-left: 8px;
}

/* admin bar */
.page {
  position: relative;
  display: flex;
  flex: 1;
  flex-direction: column;
  min-height: 0;
  background: #fff;
}

.adminbar {
  display: flex;
  align-items: center;
  gap: 18px;
  height: 40px;
  padding: 0 11px 0 9px;
  background: #23282d;
  font-size: 16px;
  color: #eee;
}

.adminbar a {
  display: flex;
  align-items: center;
  gap: 7px;
}

.adminbar svg {
  color: #a0a5aa;
}

.adminbar .count {
  color: #888;
}

.adminbar .dot {
  width: 16px;
  height: 16px;
  margin-left: 6px;
  border-radius: 50%;
  background: #ee7c1b;
}

.adminbar .howdy {
  gap: 5px;
  margin-left: auto;
  font-size: 15px;
}

.howdy .ar {
  font-size: 16px;
}

.avatar {
  margin-left: 4px;
  border: 1px solid #82878c;
}

/* admin menu */
.wp {
  display: flex;
  flex: 1;
  min-height: 0;
}

.adminmenu {
  display: flex;
  flex: none;
  flex-direction: column;
  gap: 11px;
  width: 200px;
  padding-top: 16px;
  overflow: hidden;
  background: #23282d;
  color: #eee;
  font-size: 16px;
  line-height: 21px;
}

.adminmenu a {
  display: flex;
  gap: 10px;
  padding: 11px 0 11px 10px;
  white-space: nowrap;
}

.adminmenu a svg {
  height: 21px;
  overflow: visible;
  color: #a0a5aa;
}

.adminmenu .current > a {
  position: relative;
  background: #0073aa;
  color: #fff;
}

.adminmenu .current > a svg {
  color: #fff;
}

.adminmenu .current > a::after {
  content: "";
  position: absolute;
  top: 10px;
  right: 0;
  border: 11px solid transparent;
  border-left-width: 0;
  border-right: 10px solid #fff;
}

.submenu {
  padding: 8px 0;
  background: #32373c;
  font-size: 15px;
}

.adminmenu .submenu a {
  padding: 7px 15px;
  color: #b4b9be;
}

.adminmenu .submenu .selected {
  color: #fff;
  font-weight: 600;
}

/* editor */
.editor {
  display: flex;
  flex: 1;
  flex-direction: column;
  min-width: 0;
}

.editor-header {
  display: flex;
  align-items: center;
  justify-content: space-between;
  height: 70px;
  padding: 0 30px 0 10px;
  border-bottom: 1px solid #e2e4e7;
}

.editor-actions {
  display: flex;
  align-items: center;
}

.btn {
  height: 38px;
  padding: 0 17px;
  border: 1px solid #007cba;
  border-radius: 4px;
  font-size: 15px;
  color: #0071a1;
}

.btn.tall {
  height: 42px;
  margin-right: 8px;
  padding: 0 15px;
}

.btn.primary {
  margin-right: 25px;
  background: #007cba;
  color: #fff;
}

.link-btn {
  margin-right: 30px;
  font-size: 15px;
  color: #0071a1;
}

.icon-btn {
  display: flex;
  align-items: center;
  justify-content: center;
  height: 43px;
}

.icon-btn.pressed {
  width: 43px;
  margin: 0 13px 0 16px;
  border-radius: 4px;
  background: #555d66;
}

.icon-btn.jetpack {
  margin-right: 32px;
  color: #2fb41f;
}

.editor-body {
  display: flex;
  flex: 1;
  min-height: 0;
}

.metaboxes {
  flex: 1;
  min-width: 0;
  margin: 0 25px;
  overflow: hidden;
  border-right: 1px solid #f3f3f3;
}

.grid-fields {
  display: flex;
  height: 39px;
  padding-left: 23px;
  border-bottom: 1px solid #e2e4e7;
}

.grid-fields input {
  width: 60px;
  height: 32px;
  margin-top: -9px;
  padding: 0 7px;
  border: 1px solid #7e8993;
  border-radius: 4px;
  background: #fff;
}

.grid-fields label {
  margin: 0 13px 0 7px;
  line-height: 18px;
}

.metabox-title {
  display: flex;
  align-items: center;
  justify-content: space-between;
  height: 73px;
  padding: 0 20px 0 19px;
  border-bottom: 1px solid #e2e4e7;
}

.metabox-title h2 {
  padding-top: 10px;
  font-size: 16px;
  font-weight: 600;
}

.metabox-title span {
  font-size: 14px;
}

.yoast-box {
  max-width: 1019px;
  padding: 15px 0 0 18px;
}

.yoast-tabs {
  display: flex;
  align-items: flex-end;
  padding-left: 18px;
}

.yoast-tabs button {
  display: flex;
  align-items: center;
  gap: 12px;
  height: 39px;
  padding: 0 11px;
  border: 1px solid #ddd;
  border-left: 0;
  border-bottom: 0;
  background: #f7f7f7;
  color: #0073aa;
}

.yoast-tabs .active {
  height: 45px;
  padding: 0 11px 0 13px;
  border-left: 1px solid #ddd;
  background: #fff;
  color: #555;
}

.yoast-panel {
  border: 1px solid #ddd;
}

.yoast-panel section {
  padding-left: 19px;
  padding-right: 26px;
  border-bottom: 1px solid #ddd;
}

.keyphrase {
  display: flex;
  flex-direction: column;
  gap: 7px;
  padding-top: 22px;
  padding-bottom: 19px;
  border-bottom: 1px solid #ddd;
}

.keyphrase label {
  display: flex;
  align-items: center;
  gap: 11px;
  line-height: 24px;
  font-size: 15px;
  font-weight: 700;
}

.keyphrase input {
  width: 100%;
  height: 42px;
  padding: 0 11px;
  border: 1px solid #ddd;
  background: #fff;
  font-size: 15px;
}

h3 {
  font-size: 19px;
  font-weight: 400;
  line-height: 28px;
}

.preview-section {
  padding-top: 23px;
  padding-bottom: 32px;
}

.preview-section h3 {
  margin-bottom: 33px;
}

.preview-as {
  line-height: 24px;
  font-weight: 600;
}

.radios {
  display: flex;
  gap: 18px;
  margin-top: 12px;
  font-size: 17px;
  line-height: 24px;
}

.radios label {
  display: flex;
  align-items: center;
  gap: 10px;
  white-space: nowrap;
}

.radios input {
  appearance: none;
  width: 20px;
  height: 20px;
  margin: 0;
  border: 1px solid #7e8993;
  border-radius: 50%;
  background: #fff;
}

.radios input:checked {
  background: radial-gradient(circle, #1e8cbe 5px, #fff 6px);
}

.snippet {
  position: relative;
  margin-top: 23px;
  padding-left: 25px;
  font-family: "Liberation Sans", "DejaVu Sans", sans-serif;
  white-space: nowrap;
}

.snippet-title {
  font-size: 25px;
  line-height: 30px;
  color: #1e0fbe;
}

.snippet-url {
  margin-top: 4px;
  font-size: 20px;
  line-height: 28px;
  color: #006621;
}

.snippet-desc {
  margin-top: 6px;
  font-size: 17px;
  line-height: 27px;
  color: #545454;
}

.snippet-desc .date {
  color: #808080;
}

.snippet .ar {
  line-height: 20px;
}

.snippet-title .ar {
  font-size: 20px;
}

.snippet-desc .ar {
  font-size: 14px;
}

.edit-snippet {
  display: flex;
  align-items: center;
  gap: 9px;
  height: 42px;
  margin: 15px 0 0 5px;
  padding: 0 13px 0 11px;
  border: 1px solid #ccc;
  border-radius: 4px;
  background: #f7f7f7;
  font-family: "Liberation Sans", sans-serif;
}

.collapse {
  display: flex;
  gap: 10px;
  padding-top: 21px;
  padding-bottom: 17px;
}

.collapse p {
  line-height: 26px;
  font-size: 15px;
}

.collapse > svg {
  margin-top: -1px;
}

.yoast-panel .related {
  align-items: center;
  height: 72px;
  padding-bottom: 21px;
}

.soft {
  opacity: .7;
}

.chevron {
  margin-left: auto;
}

/* scrollbars */
.scrollbar {
  display: flex;
  flex-direction: column;
  align-items: center;
  flex: none;
  width: 18px;
  padding: 5px 0 3px;
  background: #f1f1f1;
}

.scrollbar .thumb {
  width: 100%;
  background: #cdcdcd;
}

.page-scroll .thumb {
  height: 156px;
  margin: 285px 0 auto;
}

.modal-scroll .thumb {
  flex: 1;
  margin: 3px 0 20px;
}

.faint {
  opacity: .5;
}

/* sidebar */
.yoast-sidebar {
  width: 350px;
  border-left: 1px solid #e2e4e7;
}

.sidebar-header {
  display: flex;
  align-items: center;
  gap: 21px;
  height: 61px;
  padding: 0 15px 0 20px;
  border-bottom: 1px solid #e2e4e7;
  background: #f3f4f5;
  font-size: 15px;
}

.sidebar-header strong {
  flex: 1;
  font-weight: 600;
}

.sidebar-header button {
  display: flex;
}

.yoast-sidebar .keyphrase {
  padding-left: 20px;
  padding-right: 20px;
}

.side-row {
  display: flex;
  align-items: center;
  gap: 11px;
  width: 100%;
  height: 71px;
  padding: 4px 26px 0 20px;
  border-bottom: 1px solid #ddd;
  font-size: 19px;
  line-height: 28px;
  text-align: left;
}

.side-row.preview-row {
  height: 68px;
  padding-right: 20px;
}

.side-row.two-line {
  height: 93px;
}

.side-row.last {
  height: 73px;
  border-bottom-width: 2px;
}

.side-row .end {
  margin-left: auto;
}

.side-row small {
  display: block;
  font-size: 15px;
  line-height: 24px;
}

.two-line svg:first-child {
  margin-bottom: 32px;
}

.two-line svg.end {
  margin-bottom: 20px;
}

/* modal */
.overlay {
  position: absolute;
  inset: 0;
  display: flex;
  align-items: center;
  justify-content: center;
  background: rgba(164, 40, 106, .6);
}

.modal {
  position: relative;
  display: flex;
  width: 881px;
  border: 1px solid #e2e4e7;
  background: #fff;
  box-shadow: 0 3px 30px rgba(25, 30, 35, .2);
}

.modal-main {
  flex: 1;
  min-width: 0;
}

.modal-header {
  display: flex;
  align-items: center;
  justify-content: space-between;
  height: 71px;
  padding: 0 31px 0 30px;
  border-bottom: 1px solid #e2e4e7;
}

.modal-header h1 {
  font-size: 19px;
  font-weight: 600;
  color: #23282d;
}

.modal-header button {
  display: flex;
}

.modal-body {
  padding: 42px 31px 13px 30px;
}

.big {
  margin-top: 11px;
  gap: 17px;
  color: #444;
}

.big label {
  gap: 15px;
}

.big label + label {
  gap: 12px;
}

.big input {
  border: 3px solid #6c7781;
}

.big input:checked {
  width: 25px;
  height: 25px;
  background: radial-gradient(circle, #fff 3px, #11a0d2 4px);
  border-color: #555d66;
}

.with-caret {
  margin-top: 22px;
}

.with-caret::before,
.title-field::before {
  content: "";
  position: absolute;
  top: 4px;
  left: 4px;
  border: 9px solid transparent;
  border-left: 10px solid #ccc;
  border-right: 0;
}

.with-caret .snippet-url::after {
  content: "";
  display: inline-block;
  margin-left: 11px;
  border: 5px solid transparent;
  border-top: 6px solid #006621;
  border-bottom: 0;
  vertical-align: 5px;
}

.dots {
  color: #545454;
}

.field-head {
  display: flex;
  align-items: center;
  justify-content: space-between;
  margin-top: 30px;
}

.field-head,
.slug-label {
  font-family: "Liberation Sans", sans-serif;
  font-size: 20px;
  color: #444;
}

.insert {
  display: flex;
  align-items: center;
  gap: 11px;
  height: 42px;
  padding: 0 14px 0 11px;
  border: 1px solid #ddd;
  border-radius: 4px 4px 0 0;
  background: #f7f7f7;
  font-size: 16px;
  color: #555;
}

.title-field {
  position: relative;
  display: flex;
  align-items: center;
  gap: 9px;
  height: 46px;
  padding: 0 9px;
  border: 1px solid #ddd;
  box-shadow: inset 0 1px 2px rgba(0, 0, 0, .07);
}

.title-field::before {
  top: 6px;
  left: -21px;
}

.pill {
  height: 31px;
  padding: 0 10px;
  border-radius: 16px;
  background: #a4286a;
  font-family: "Liberation Sans", sans-serif;
  font-size: 18px;
  line-height: 31px;
  color: #fff;
}

.bar {
  height: 11px;
  margin-top: 9px;
  border: 1px solid #ddd;
  background: #f7f7f7;
}

.bar span {
  display: block;
  height: 100%;
}

.bar .good {
  width: 82%;
  background: #7ad03a;
}

.bar .ok {
  background: #ee7c1b;
}

.slug-label {
  display: block;
  margin-top: 31px;
  line-height: 28px;
}

.slug,
.modal textarea {
  display: block;
  width: 100%;
  border: 1px solid #ddd;
  background: #fff;
  color: #32373c;
  box-shadow: inset 0 1px 2px rgba(0, 0, 0, .07);
  font-family: "Liberation Sans", "DejaVu Sans", sans-serif;
}

.slug {
  height: 36px;
  margin-top: 1px;
  padding: 0 5px 0 8px;
  font-size: 17px;
}

.meta-head {
  margin-top: 29px;
}

.modal textarea {
  height: 98px;
  padding: 3px 8px;
  resize: none;
  overflow: hidden;
  white-space: pre;
  font-size: 13px;
  line-height: 30px;
}

.close-btn {
  height: 37px;
  margin-top: 12px;
  padding: 0 14px;
  border: 1px solid #007cba;
  border-radius: 4px;
  background: #f3f5f6;
  font-size: 15px;
  color: #0071a1;
}

.red-box {
  position: absolute;
  top: 111px;
  left: -12px;
  width: 158px;
  height: 175px;
  border: 8px solid #ed1c24;
}

/* taskbar */
.taskbar {
  display: flex;
  height: 50px;
  background: #101010;
  font-size: 15px;
  color: #fff;
}

.taskbar svg {
  overflow: visible;
}

.start {
  width: 60px;
}

.search {
  display: flex;
  align-items: center;
  gap: 10px;
  width: 430px;
  padding-left: 14px;
  border: 1px solid #ccc;
  background: #f3f3f3;
  color: #333;
  font-size: 18px;
}

.search input {
  flex: 1;
  border: 0;
  background: none;
}

.search input::placeholder {
  color: #333;
}

.explorer {
  width: 66px;
}

.task {
  display: flex;
  align-items: center;
  gap: 5px;
  width: 200px;
  padding: 0 12px;
  border-bottom: 3px solid #76b9ed;
  white-space: nowrap;
}

.task.active {
  background: #333;
}

.task.paint {
  width: 190px;
  margin-left: 6px;
  padding: 0 8px;
}

.tray {
  display: flex;
  align-items: center;
  gap: 13px;
  margin-left: auto;
}

.tray > svg:first-child {
  margin-right: 12px;
}

.clock {
  width: 80px;
  line-height: 23px;
  text-align: center;
}

.notes {
  position: relative;
  display: flex;
}

.notes b {
  position: absolute;
  top: 10px;
  left: 16px;
  font-weight: 400;
}

.show-desktop {
  width: 5px;
  height: 100%;
  border-left: 1px solid #666;
}
```
